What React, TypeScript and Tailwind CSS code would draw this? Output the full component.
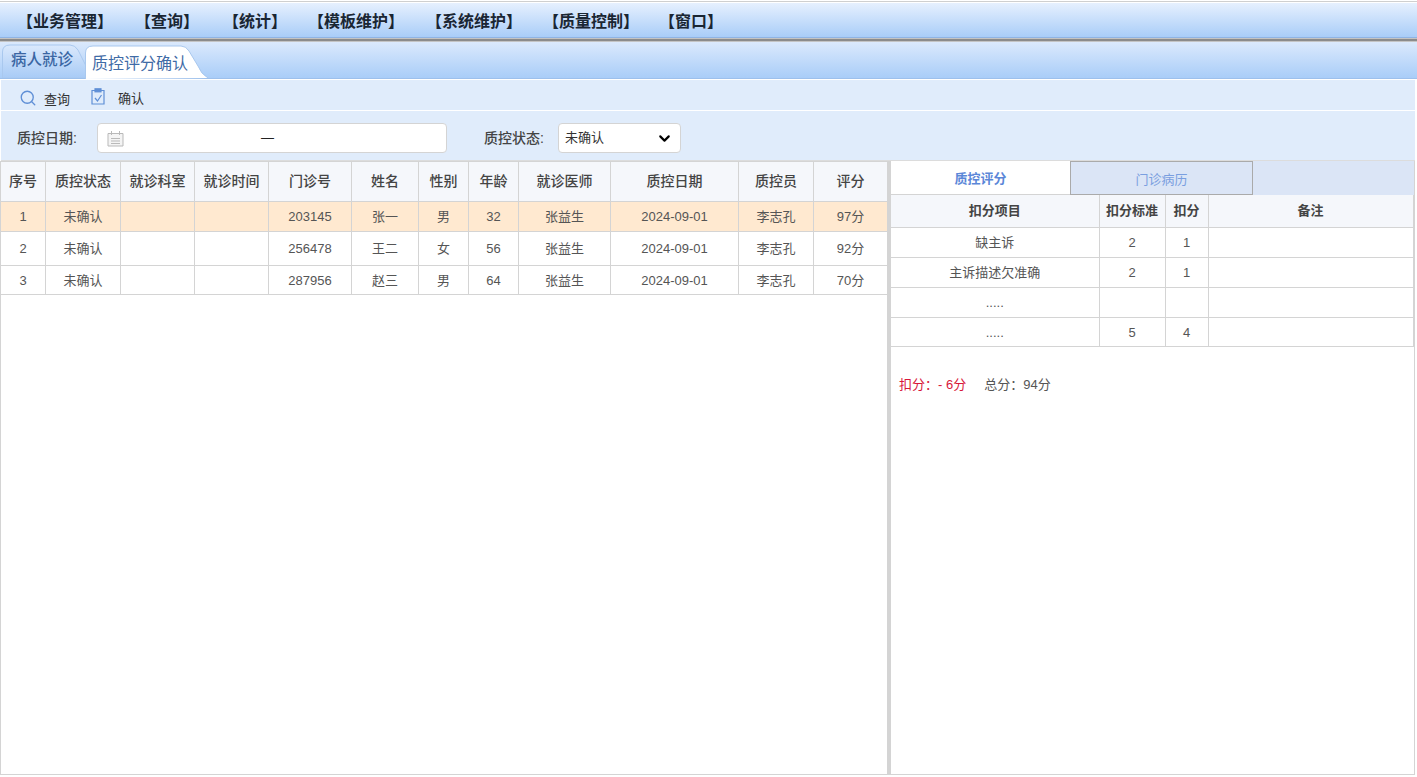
import { ChevronDown, Search } from "lucide-react";

const font = "font-['Liberation_Sans','Noto_Sans_CJK_SC',sans-serif]";

const menus = [
  { label: "【业务管理】", width: "w-[118px]" },
  { label: "【查询】", width: "w-[88px]" },
  { label: "【统计】", width: "w-[85px]" },
  { label: "【模板维护】", width: "w-[118px]" },
  { label: "【系统维护】", width: "w-[117px]" },
  { label: "【质量控制】", width: "w-[116px]" },
  { label: "【窗口】", width: "w-[80px]" },
];

const leftCols = [45, 75, 74, 74, 83, 67, 50, 50, 92, 128, 75, 74];
const leftHead = ["序号", "质控状态", "就诊科室", "就诊时间", "门诊号", "姓名", "性别", "年龄", "就诊医师", "质控日期", "质控员", "评分"];
const leftRows = [
  { h: "h-[30px]", pad: "p-0", cells: ["1", "未确认", "", "", "203145", "张一", "男", "32", "张益生", "2024-09-01", "李志孔", "97分"] },
  { h: "h-[34px]", pad: "p-0", cells: ["2", "未确认", "", "", "256478", "王二", "女", "56", "张益生", "2024-09-01", "李志孔", "92分"] },
  { h: "h-[29px]", pad: "pt-[1px]", cells: ["3", "未确认", "", "", "287956", "赵三", "男", "64", "张益生", "2024-09-01", "李志孔", "70分"] },
];

const rightCols = [208, 66, 43, 205];
const rightHead = ["扣分项目", "扣分标准", "扣分", "备注"];
const rightRows = [
  { h: "h-[30px]", cells: ["缺主诉", "2", "1", ""] },
  { h: "h-[30px]", cells: ["主诉描述欠准确", "2", "1", ""] },
  { h: "h-[30px]", cells: [".....", "", "", ""] },
  { h: "h-[29px]", cells: [".....", "5", "4", ""] },
];

function TabShape({ active }: { active: boolean }) {
  // the rounded, slanted outline behind each tab
  return active ? (
    <svg className="absolute inset-0" width="124" height="34" viewBox="0 0 124 34">
      <path d="M0.5 34V8Q0.5 1 8 1H96Q101 1 104 6L113 21Q116 29 123 33" fill="#ffffff" stroke="#a9c8ee" />
    </svg>
  ) : (
    <svg className="absolute inset-0" width="84" height="34" viewBox="0 0 84 34">
      <defs>
        <linearGradient id="tabOff" x1="0" y1="0" x2="0" y2="1">
          <stop offset="0" stopColor="#dbe9fc" />
          <stop offset="1" stopColor="#a8cbf6" />
        </linearGradient>
      </defs>
      <path d="M0.5 34V8Q0.5 1 8 1H68Q73 1 76 6L84 22V34Z" fill="url(#tabOff)" stroke="#a9c8ee" />
    </svg>
  );
}

function ClipboardIcon() {
  return (
    <svg width="14" height="17" viewBox="0 0 14 17" fill="none" stroke="#5f8fd6" strokeWidth="1.2">
      <path d="M4 2.5H1V16H13V2.5H10" />
      <rect x="4" y="0.8" width="6" height="3" fill="#5f8fd6" />
      <path d="M4 10L6.5 13L10.5 7" />
    </svg>
  );
}

function CalendarIcon() {
  return (
    <svg width="17" height="17" viewBox="0 0 17 17" fill="none" stroke="#b9b9b9">
      <path d="M1 3.5H16V16H1Z" fill="#f4f4f4" />
      <path d="M4.5 1V5M12.5 1V5M4 8.5H13M4 11H13M4 13.5H13" />
    </svg>
  );
}

export default function App() {
  return (
    <div className={`${font} w-[1417px] h-[777px] overflow-hidden bg-white flex flex-col text-[13px] text-[#444]`}>
      <div className="h-[3px] shrink-0 bg-white pt-[1px]">
        <div className="h-[1px] bg-[#cfcfcf]" />
      </div>

      {/* menu bar */}
      <div className="h-[35px] shrink-0 flex items-center pl-[17px] pt-[4px] bg-gradient-to-b from-[#e6f0fe] to-[#a9cdf8] border-b border-b-[#8fb4e4]">
        {menus.map((m) => (
          <div key={m.label} className={`${m.width} shrink-0 text-[16px] leading-[20px] font-bold text-[#1a2633] whitespace-nowrap`}>
            {m.label}
          </div>
        ))}
      </div>
      <div className="h-[4px] shrink-0 bg-[#8b8b8b] border-y border-y-[#c4c4c4]" />

      {/* tabs */}
      <div className="h-[37px] shrink-0 flex items-end pl-[2px] bg-gradient-to-b from-[#dbe9fc] to-[#a9cdf8] border-b border-b-[#9dc0ec]">
        <div className="relative w-[84px] h-[34px] shrink-0 -mr-[1px]">
          <TabShape active={false} />
          <div className="relative pl-[9px] pt-[4px] text-[15.5px] leading-[24px] font-medium text-[#3a66a3] whitespace-nowrap">病人就诊</div>
        </div>
        <div className="relative w-[124px] h-[33px] shrink-0">
          <TabShape active />
          <div className="relative pl-[7px] pt-[7px] text-[16px] leading-[24px] text-[#3f6ba6] whitespace-nowrap">质控评分确认</div>
        </div>
      </div>
      <div className="h-[1px] shrink-0 bg-white" />

      {/* toolbar */}
      <div className="h-[30px] ml-[1px] mr-[2px] shrink-0 flex items-center pl-[18px] bg-[#e0ecfb] border-b border-b-white box-content">
        <Search size={18} strokeWidth={1.8} className="text-[#5f8fd6] mt-[5px]" />
        <span className="ml-[7px] mt-[9px] text-[13px] text-[#333]">查询</span>
        <span className="ml-[21px] mt-[3px]"><ClipboardIcon /></span>
        <span className="ml-[13px] mt-[7px] text-[13px] text-[#333]">确认</span>
      </div>

      {/* filter form */}
      <div className="h-[50px] ml-[1px] mr-[2px] shrink-0 flex items-center pl-[16px] pt-[5px] bg-[#e0ecfb] border-b border-b-[#dcdcdc]">
        <span className="w-[80px] shrink-0 text-[14px] font-medium text-[#444]">质控日期:</span>
        <div className="w-[350px] h-[30px] shrink-0 flex items-center pl-[9px] bg-white border border-[#d4d4d4] rounded-[4px]">
          <CalendarIcon />
          <span className="ml-[137px] text-[13px] text-[#222]">—</span>
        </div>
        <span className="ml-[37px] w-[74px] shrink-0 text-[14px] font-medium text-[#444] whitespace-nowrap">质控状态:</span>
        <div className="w-[123px] h-[30px] shrink-0 flex items-center justify-between pl-[6px] pr-[7px] bg-white border border-[#d4d4d4] rounded-[4px]">
          <span className="text-[13px] text-[#333]">未确认</span>
          <ChevronDown size={17} strokeWidth={3} className="text-black" />
        </div>
      </div>

      {/* main panels */}
      <div className="flex-1 min-h-0 mr-[2px] flex border-b border-b-[#d4d4d4]">
        <div className="w-[887px] shrink-0 border-l border-l-[#d4d4d4]">
          <table className="table-fixed border-collapse w-[887px] -ml-[1px]">
            <colgroup>
              {leftCols.map((w, i) => (
                <col key={i} style={{ width: w }} />
              ))}
            </colgroup>
            <thead>
              <tr className="h-[40px] bg-[#f5f7fb]">
                {leftHead.map((t) => (
                  <th key={t} className="border border-[#d4d4d4] text-[14px] font-medium text-[#444] p-0">{t}</th>
                ))}
              </tr>
            </thead>
            <tbody>
              {leftRows.map((r, i) => (
                <tr key={i} className={`${r.h} ${i === 0 ? "bg-[#ffe9d0]" : "bg-white"}`}>
                  {r.cells.map((c, j) => (
                    <td key={j} className={`border border-[#d4d4d4] text-center text-[13px] text-[#555] ${r.pad}`}>{c}</td>
                  ))}
                </tr>
              ))}
            </tbody>
          </table>
        </div>

        <div className="w-[4px] shrink-0 bg-[#d4d4d4]" />

        <div className="flex-1 min-w-0 border-r border-r-[#d4d4d4]">
          <div className="h-[34px] flex bg-[#dbe5f6]">
            <div className="w-[179px] h-[34px] flex items-center justify-center pt-[3px] bg-white border-b border-b-[#d4d4d4] text-[13px] font-bold text-[#5b87d8]">质控评分</div>
            <div className="w-[183px] h-[34px] flex items-center justify-center pt-[3px] border border-[#aaaaaa] text-[13px] text-[#7a9fe0]">门诊病历</div>
          </div>
          <table className="table-fixed border-collapse w-[522px]">
            <colgroup>
              {rightCols.map((w, i) => (
                <col key={i} style={{ width: w }} />
              ))}
            </colgroup>
            <thead>
              <tr className="h-[32px] bg-[#f5f7fb]">
                {rightHead.map((t) => (
                  <th key={t} className="border border-[#d4d4d4] border-l-0 border-t-0 text-[13px] font-bold text-[#444] p-0">{t}</th>
                ))}
              </tr>
            </thead>
            <tbody>
              {rightRows.map((r, i) => (
                <tr key={i} className={r.h}>
                  {r.cells.map((c, j) => (
                    <td key={j} className="border border-[#d4d4d4] border-l-0 text-center text-[13px] text-[#555] pt-[2px] pb-0 px-0">{c}</td>
                  ))}
                </tr>
              ))}
            </tbody>
          </table>
          <div className="mt-[29px] pl-[8px] flex text-[13px] leading-[18px]">
            <span className="text-[#d8173a] whitespace-pre">{"扣分\uFF1A- 6分"}</span>
            <span className="ml-[18px] text-[#555] whitespace-pre">{"总分\uFF1A94分"}</span>
          </div>
        </div>
      </div>
      <div className="h-[2px] shrink-0 bg-white" />
    </div>
  );
}
